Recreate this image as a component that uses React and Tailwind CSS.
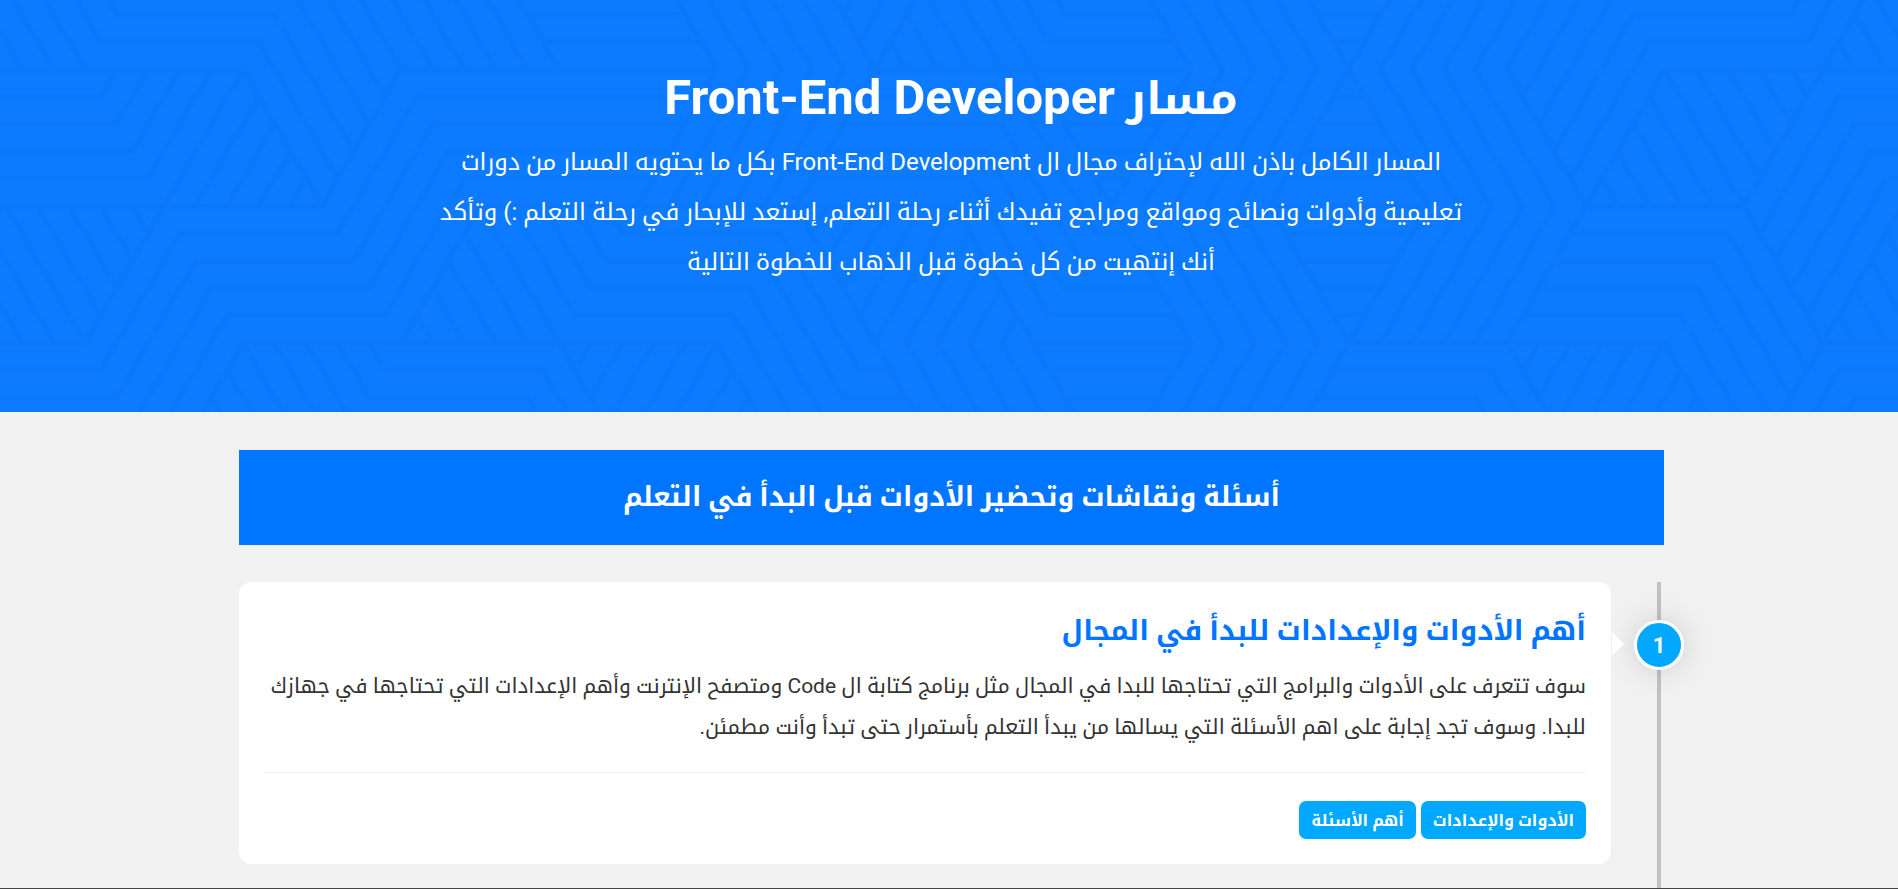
const SIDE = 158;
const ROW_HEIGHT = 136.8;
const ROW_TOP = -67.6;
const BANDS = 5;

/* Stripe direction of each triangle, left to right: H = level, F = rising, B = falling. */
const ROWS = [
  "BBBHHBBBHHBBFBBHBBHFFFHHFB",
  "HHHFFBFHHHFFHHBHFFHBBFBBFH",
  "BBBFHHFBBHHBFFBHBBHFFHHBFB",
  "HHHFBBHHBFFBHBBHFFHHBFFBFH",
];

function stripes(row, col, dir) {
  const cx = 6 + (SIDE / 2) * (col - 1);
  const top = ROW_TOP + row * ROW_HEIGHT;
  const bottom = top + ROW_HEIGHT;
  const pointsUp = (row + col) % 2 === 1;
  const apex = [cx, pointsUp ? top : bottom];
  const baseY = pointsUp ? bottom : top;
  const left = [cx - SIDE / 2, baseY];
  const right = [cx + SIDE / 2, baseY];
  const leansWithLeftSide = pointsUp ? "F" : "B";
  let far = apex;
  let a = left;
  let b = right;
  if (dir !== "H") {
    far = dir === leansWithLeftSide ? right : left;
    a = dir === leansWithLeftSide ? left : right;
    b = apex;
  }
  let d = "";
  for (let i = 0; i < BANDS; i++) {
    const t = i / BANDS;
    const p = [a[0] + (far[0] - a[0]) * t, a[1] + (far[1] - a[1]) * t];
    const q = [b[0] + (far[0] - b[0]) * t, b[1] + (far[1] - b[1]) * t];
    d += `M${p[0].toFixed(1)} ${p[1].toFixed(1)}L${q[0].toFixed(1)} ${q[1].toFixed(1)}`;
  }
  return d;
}

const PATTERN = ROWS.map((line, row) =>
  line.split("").map((dir, col) => stripes(row, col, dir)).join("")
).join("");

function HeroPattern() {
  return (
    <svg
      aria-hidden="true"
      className="absolute inset-0 h-full w-full"
      viewBox="0 0 1898 412"
      preserveAspectRatio="xMidYMin slice"
      fill="none"
      strokeLinecap="round"
    >
      <path d={PATTERN} stroke="#0c7afc" strokeWidth="7" />
      <path d={PATTERN} stroke="#0a78f9" strokeWidth="4" />
    </svg>
  );
}

function Tag({ children }) {
  return (
    <a href="#" className="flex h-[38px] items-center rounded-[7px] bg-[#00a8ff] px-3 pt-0.5 text-base font-bold text-white">
      {children}
    </a>
  );
}

export default function App() {
  return (
    <div
      dir="rtl"
      lang="ar"
      className="flex min-h-screen flex-col border-b border-[#444] bg-[#f1f1f1] font-['Roboto','Noto_Kufi_Arabic','DejaVu_Sans',sans-serif]"
    >
      <header className="relative h-[412px] bg-[#0d7bff] pt-[68px] pl-1 text-center text-white">
        <HeroPattern />
        <div className="relative">
          <h1 className="text-[45px] leading-[60px] font-bold">
            مسار <span className="text-[49px]">Front-End Developer</span>
          </h1>
          <p className="mt-2 text-[24px] leading-[50px]">
            المسار الكامل باذن الله لإحتراف مجال ال Front-End Development بكل ما يحتويه المسار من دورات
            <br />
            تعليمية وأدوات ونصائح ومواقع ومراجع تفيدك أثناء رحلة التعلم, إستعد للإبحار في رحلة التعلم :) وتأكد
            <br />
            أنك إنتهيت من كل خطوة قبل الذهاب للخطوة التالية
          </p>
        </div>
      </header>

      <main className="flex grow flex-col pt-[38px] pr-[234px] pl-[239px]">
        <h2 className="flex h-[95px] items-center justify-center bg-[#0075ff] text-[27px] font-bold text-white">
          أسئلة ونقاشات وتحضير الأدوات قبل البدأ في التعلم
        </h2>

        <section className="relative mt-[37px] grow pr-[53px] pb-6">
          <div className="absolute inset-y-0 right-[3px] w-1 bg-[#c1c1c1]" />
          <div className="absolute top-[38px] -right-5 flex size-[50px] items-center justify-center rounded-full border-3 border-white bg-[#00a8ff] text-[22px] font-bold text-white shadow-[0_0_30px_rgba(0,0,0,0.15)]">
            1
          </div>
          <article className="relative rounded-xl bg-white p-[25px]">
            <svg aria-hidden="true" className="absolute top-[50px] -right-[13px]" width="12" height="24" viewBox="0 0 12 24">
              <path d="M0 0L12 12L0 24Z" fill="#fff" />
            </svg>
            <h3 className="text-[28px] leading-[48px] font-bold text-[#0075ff]">أهم الأدوات والإعدادات للبدأ في المجال</h3>
            <p className="mt-[11px] text-[21px] leading-[41px] text-[#333]">
              سوف تتعرف على الأدوات والبرامج التي تحتاجها للبدا في المجال مثل برنامج كتابة ال Code ومتصفح الإنترنت وأهم الإعدادات التي تحتاجها في جهازك
              <br />
              للبدا. وسوف تجد إجابة على اهم الأسئلة التي يسالها من يبدأ التعلم بأستمرار حتى تبدأ وأنت مطمئن.
            </p>
            <hr className="mt-6 border-[#eee]" />
            <div className="mt-7 flex gap-[5px]">
              <Tag>الأدوات والإعدادات</Tag>
              <Tag>أهم الأسئلة</Tag>
            </div>
          </article>
        </section>
      </main>
    </div>
  );
}
